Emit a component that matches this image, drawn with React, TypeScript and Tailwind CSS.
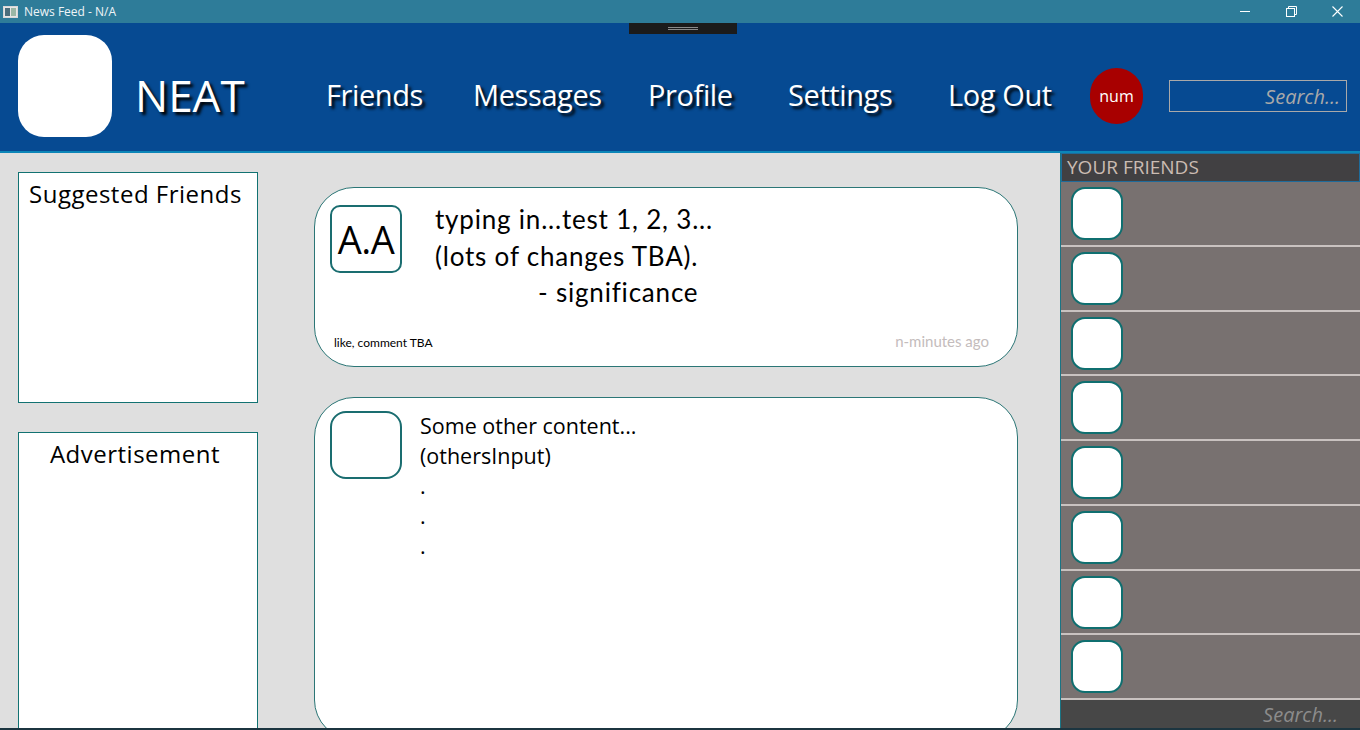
import { useState } from "react";

const navItems = [
  ["Friends", "w-[147px]"],
  ["Messages", "w-[175px]"],
  ["Profile", "w-[140px]"],
  ["Settings", "w-[160px]"],
  ["Log Out", "w-[142px]"],
] as const;

const segoe = "font-['Open_Sans',_'DejaVu_Sans',_sans-serif]";
const calibri = "font-['Lato',_'Open_Sans',_sans-serif]";

function TitleBar() {
  return (
    <div className={`flex h-[23px] shrink-0 items-center bg-[#2e7c99] text-[12px] text-[#eef4f7] ${segoe}`}>
      <div className="ml-[3px] flex h-[12px] w-[15px] items-stretch border border-[#d8d8d8] bg-[#e6e6e6] p-[1px]">
        <div className="w-[5px] bg-[#4b6e7c]" />
        <div className="ml-[1px] flex-1 bg-[#9ab7a6]" />
      </div>
      <span className="ml-[6px]">News Feed - N/A</span>
      <div className="ml-auto flex h-full items-center">
        <div className="flex w-[46px] justify-center">
          <div className="h-[1px] w-[10px] bg-white" />
        </div>
        <div className="flex w-[46px] justify-center">
          <svg width="11" height="11" viewBox="0 0 11 11" fill="none" stroke="white" strokeWidth="1">
            <rect x="0.5" y="2.5" width="8" height="8" />
            <path d="M2.5 2.5V0.5H10.5V8.5H8.5" />
          </svg>
        </div>
        <div className="flex w-[46px] justify-center">
          <svg width="11" height="11" viewBox="0 0 11 11" stroke="white" strokeWidth="1.1">
            <path d="M0.5 0.5L10.5 10.5M10.5 0.5L0.5 10.5" />
          </svg>
        </div>
      </div>
    </div>
  );
}

function Header() {
  const [query, setQuery] = useState("");
  return (
    <header className={`relative flex h-[130px] shrink-0 border-b-2 border-[#0c86b8] bg-[#064a92] ${segoe}`}>
      {/* drag handle */}
      <div className="absolute left-[629px] top-0 flex h-[11px] w-[108px] flex-col items-center justify-center gap-[1px] bg-[#1b1b1b]">
        <div className="h-[1px] w-[30px] bg-[#8a8a8a]" />
        <div className="h-[1px] w-[30px] bg-[#8a8a8a]" />
      </div>

      <div className="ml-[18px] mt-[12px] h-[102px] w-[94px] rounded-[26px] bg-white" />

      <div className="flex h-full flex-1 items-center pt-[15px]">
        <div className="ml-[23px] w-[191px] text-[44px] leading-none text-white [text-shadow:3px_3px_3px_#000]">
          NEAT
        </div>
        <nav className="flex items-center">
          {navItems.map(([label, w]) => (
            <a
              key={label}
              href="#"
              className={`${w} text-[29px] leading-none tracking-[-0.4px] text-white [text-shadow:3px_3px_3px_#000]`}
            >
              {label}
            </a>
          ))}
        </nav>
        <div className="mt-[3px] flex h-[56px] w-[53px] items-center justify-center rounded-full bg-[#a80000] text-[16px] text-white">
          num
        </div>
        <input
          value={query}
          onChange={(e) => setQuery(e.target.value)}
          placeholder="Search..."
          className="ml-[26px] mt-[3px] h-[32px] w-[178px] border border-[#a9a9a9] bg-transparent pr-[6px] text-right text-[20px] italic text-white outline-none placeholder:text-[#a9a9a9]"
        />
      </div>
    </header>
  );
}

function LeftColumn() {
  return (
    <div className={`flex w-[258px] shrink-0 flex-col gap-[29px] pl-[18px] pt-[19px] ${segoe}`}>
      <div className="h-[231px] shrink-0 border border-[#127272] bg-white pl-[10px] pt-[3px] text-[24px] tracking-[0.5px] text-black">
        Suggested Friends
      </div>
      <div className="h-[320px] shrink-0 border border-[#127272] bg-white pr-[6px] pt-[3px] text-center text-[24px] tracking-[0.5px] text-black">
        Advertisement
      </div>
    </div>
  );
}

function Posts() {
  return (
    <div className="ml-[56px] flex w-[704px] shrink-0 flex-col gap-[30px] pt-[34px]">
      <div className="flex h-[180px] shrink-0 flex-col rounded-[40px] border border-[#2b7676] bg-white pb-[14px] pl-[15px] pr-[28px] pt-[17px]">
        <div className="flex">
          <div className={`flex h-[68px] w-[72px] shrink-0 items-center justify-center rounded-[10px] border-2 border-[#1a6d70] text-[38px] tracking-[-0.5px] text-black ${segoe}`}>
            A.A
          </div>
          <div className={`ml-[33px] -mt-[4px] text-[26px] leading-[36.5px] tracking-[0.8px] text-black ${calibri}`}>
            <div>typing in...test 1, 2, 3...</div>
            <div>(lots of changes TBA).</div>
            <div className="pl-[103px]">- significance</div>
          </div>
        </div>
        <div className={`mt-auto flex items-end justify-between ${calibri}`}>
          <span className="pl-[4px] text-[12px] text-black">like, comment TBA</span>
          <span className="text-[15px] text-[#c4bcbc]">n-minutes ago</span>
        </div>
      </div>

      <div className="flex h-[343px] shrink-0 rounded-[40px] border border-[#2b7676] bg-white pl-[15px] pt-[13px]">
        <div className="h-[68px] w-[72px] shrink-0 rounded-[16px] border-2 border-[#1a6d70]" />
        <div className={`ml-[18px] text-[21.5px] leading-[30px] text-black ${segoe}`}>
          <div>Some other content...</div>
          <div>(othersInput)</div>
          <div>.</div>
          <div>.</div>
          <div>.</div>
        </div>
      </div>
    </div>
  );
}

function FriendsSidebar() {
  return (
    <aside className={`ml-auto flex w-[300px] shrink-0 flex-col border-l border-[#1a7484] bg-[#787170] ${segoe}`}>
      <div className="h-[29px] shrink-0 border border-[#1f6b9a] bg-[#414042] pl-[5px] text-[19px] leading-[27px] text-[#cbbcb3]">
        YOUR FRIENDS
      </div>
      {Array.from({ length: 8 }).map((_, i) => (
        <div key={i} className="flex-1 border-b-2 border-[#c9c2c0] pl-[10px] pt-[5px]">
          <div className="h-[53px] w-[52px] rounded-[14px] border-2 border-[#0f6f70] bg-white" />
        </div>
      ))}
      <div className="h-[28px] shrink-0 bg-[#474747] pr-[22px] text-right text-[20px] italic leading-[30px] text-[#8c8c8c]">
        Search...
      </div>
    </aside>
  );
}

export default function App() {
  return (
    <div className="flex h-[730px] w-[1360px] flex-col overflow-hidden bg-[#dfdfdf]">
      <TitleBar />
      <Header />
      <main className="flex flex-1 overflow-hidden">
        <LeftColumn />
        <Posts />
        <FriendsSidebar />
      </main>
      <div className="h-[2px] shrink-0 bg-[#1c3540]" />
    </div>
  );
}
